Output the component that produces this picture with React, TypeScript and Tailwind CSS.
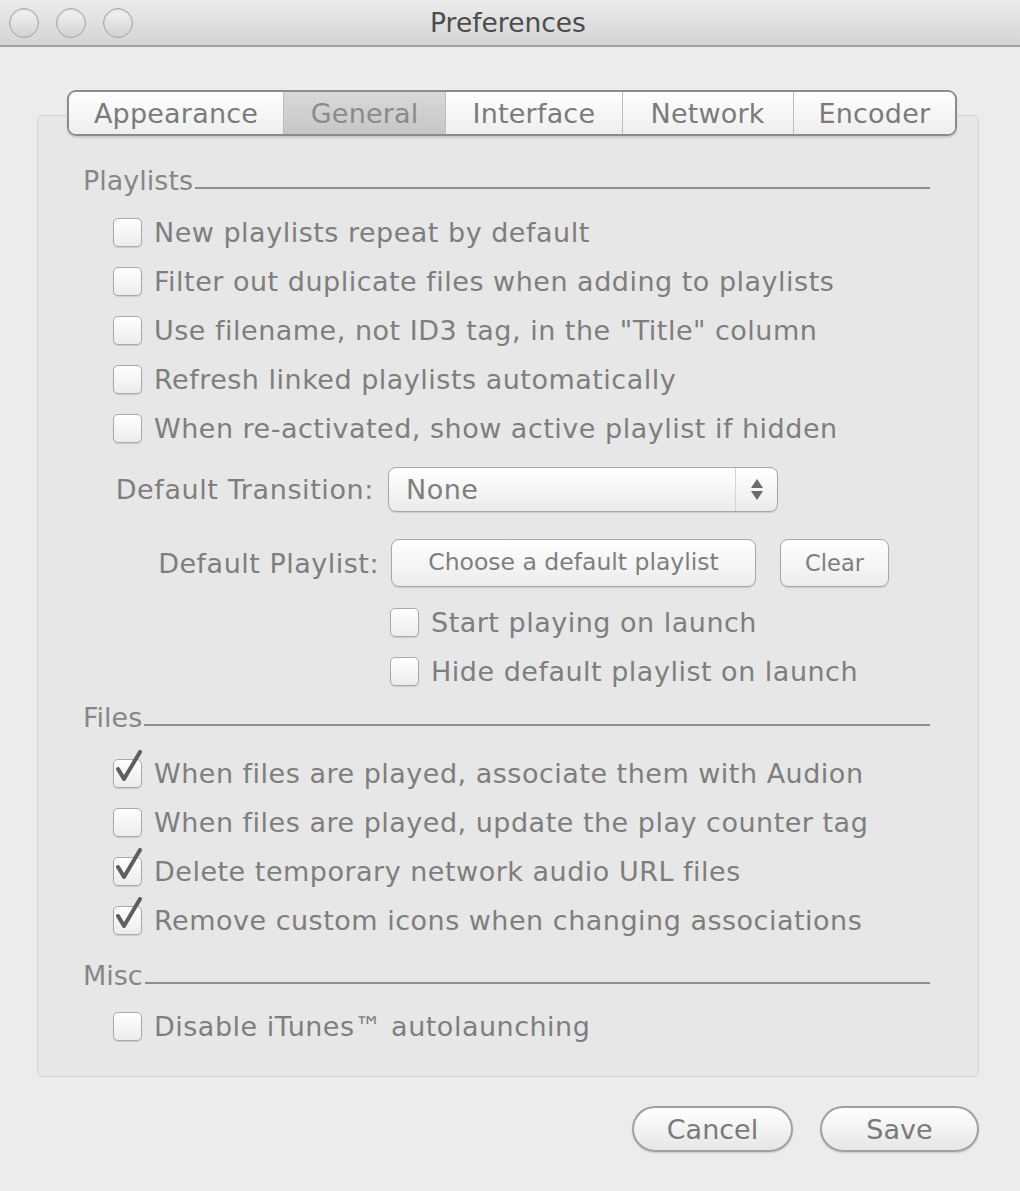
import React from "react";

const FONT = { fontFamily: '"DejaVu Sans", "Liberation Sans", sans-serif' };

function Box({ checked }: { checked?: boolean }) {
  return (
    <div className="relative w-[29px] h-[29px] shrink-0">
      <div className="absolute inset-0 rounded-[5px] border border-[#a9a9a9] bg-gradient-to-b from-[#ffffff] to-[#ececec] shadow-[0_1px_1px_rgba(0,0,0,0.12)]" />
      {checked && (
        <svg className="absolute left-[1px] top-[-9px]" width="30" height="36" viewBox="0 0 30 36">
          <path d="M4 19 L10 29 L26 2" fill="none" stroke="#5e5e5e" strokeWidth="4" strokeLinecap="round" strokeLinejoin="round" />
        </svg>
      )}
    </div>
  );
}

function Check({ label, checked }: { label: string; checked?: boolean }) {
  return (
    <div className="h-[49px] flex items-center gap-[12px]">
      <Box checked={checked} />
      <span className="text-[27px] leading-none tracking-[0.5px] text-[#7e7e7e] whitespace-nowrap pt-[0px]">{label}</span>
    </div>
  );
}

function Heading({ title }: { title: string }) {
  return (
    <div className="h-[36px] flex items-center pr-[48px]">
      <span className="text-[27px] leading-none text-[#878787] whitespace-nowrap">{title}</span>
      <div className="flex-1 h-[2px] bg-[#8e8e8e] mt-[16px] ml-[2px]" />
    </div>
  );
}

function Light() {
  return (
    <div className="w-[30px] h-[30px] rounded-full border border-[#a6a6a6] bg-gradient-to-b from-[#f4f4f4] to-[#d2d2d2] shadow-[inset_0_1px_2px_rgba(0,0,0,0.15)]" />
  );
}

export default function App() {
  const tabs = [
    { t: "Appearance", w: 215 },
    { t: "General", w: 163, sel: true },
    { t: "Interface", w: 177 },
    { t: "Network", w: 172 },
    { t: "Encoder", w: 163 },
  ];
  return (
    <div className="w-[1020px] h-[1191px] bg-[#ececec] overflow-hidden flex flex-col" style={FONT}>
      {/* Title bar */}
      <div className="h-[47px] shrink-0 relative flex items-center border-b-2 border-[#a2a2a2] bg-gradient-to-b from-[#ececec] to-[#d4d4d4]">
        <div className="flex items-center gap-[17px] pl-[9px]">
          <Light />
          <Light />
          <Light />
        </div>
        <div className="absolute inset-0 flex items-center justify-center">
          <span className="text-[26.5px] leading-none text-[#4c4c4c] ml-[-4px] pt-[2px]">Preferences</span>
        </div>
      </div>

      {/* Body */}
      <div className="flex-1 pl-[37px] pr-[41px] pt-[68px] flex flex-col">
        <div className="h-[962px] rounded-[6px] border border-[#d2d2d2] bg-[#e7e7e7] flex flex-col">
          {/* Tabs */}
          <div className="mt-[-26px] ml-[29px] flex h-[46px] w-[890px] rounded-[9px] border-2 border-[#8c8c8c] overflow-hidden shadow-[0_2px_2px_rgba(0,0,0,0.12)]">
            {tabs.map((tb, i) => (
              <div
                key={tb.t}
                style={{ width: tb.w }}
                className={
                  "h-full flex items-center justify-center text-[27px] leading-none tracking-[0.2px] " +
                  (i > 0 ? "border-l border-[#bdbdbd] " : "") +
                  (tb.sel
                    ? "bg-gradient-to-b from-[#d9d9d9] to-[#c6c6c6] text-[#8a8a8a]"
                    : "bg-gradient-to-b from-[#ffffff] to-[#eeeeee] text-[#7b7b7b]")
                }
              >
                {tb.t}
              </div>
            ))}
          </div>

          <div className="pl-[45px] flex flex-col">
            <div className="mt-[26px]">
              <Heading title="Playlists" />
            </div>
            <div className="ml-[30px] mt-[10px] flex flex-col">
              <Check label="New playlists repeat by default" />
              <Check label="Filter out duplicate files when adding to playlists" />
              <Check label={'Use filename, not ID3 tag, in the "Title" column'} />
              <Check label="Refresh linked playlists automatically" />
              <Check label="When re-activated, show active playlist if hidden" />

              <div className="mt-[14px] h-[45px] flex items-center">
                <span className="w-[261px] text-right text-[27px] leading-none tracking-[0.6px] text-[#7e7e7e] whitespace-nowrap">Default Transition:</span>
                <div className="ml-[14px] w-[390px] h-[45px] rounded-[8px] border border-[#a8a8a8] bg-gradient-to-b from-[#ffffff] to-[#ebebeb] shadow-[0_1px_1px_rgba(0,0,0,0.12)] flex items-center">
                  <span className="flex-1 pl-[17px] text-[27px] leading-none tracking-[0.5px] text-[#7e7e7e]">None</span>
                  <div className="w-[42px] h-full border-l border-[#d4d4d4] flex flex-col items-center justify-center gap-[3px]">
                    <svg width="12" height="9" viewBox="0 0 12 9"><path d="M6 0 L12 9 L0 9 Z" fill="#6a6a6a" /></svg>
                    <svg width="12" height="9" viewBox="0 0 12 9"><path d="M0 0 L12 0 L6 9 Z" fill="#6a6a6a" /></svg>
                  </div>
                </div>
              </div>

              <div className="mt-[27px] h-[48px] flex items-center">
                <span className="w-[266px] text-right text-[27px] leading-none tracking-[0.5px] text-[#7e7e7e] whitespace-nowrap">Default Playlist:</span>
                <div className="ml-[12px] w-[365px] h-[48px] rounded-[8px] border border-[#a8a8a8] bg-gradient-to-b from-[#ffffff] to-[#ececec] shadow-[0_1px_1px_rgba(0,0,0,0.12)] flex items-center justify-center">
                  <span className="text-[23.5px] leading-none text-[#7e7e7e]">Choose a default playlist</span>
                </div>
                <div className="ml-[24px] w-[109px] h-[48px] rounded-[8px] border border-[#a8a8a8] bg-gradient-to-b from-[#ffffff] to-[#ececec] shadow-[0_1px_1px_rgba(0,0,0,0.12)] flex items-center justify-center">
                  <span className="text-[22.5px] leading-none text-[#7e7e7e]">Clear</span>
                </div>
              </div>

              <div className="mt-[11px] ml-[277px] flex flex-col">
                <Check label="Start playing on launch" />
                <Check label="Hide default playlist on launch" />
              </div>
            </div>

            <div className="mt-[3px]">
              <Heading title="Files" />
            </div>
            <div className="ml-[30px] mt-[14px] flex flex-col">
              <Check label="When files are played, associate them with Audion" checked />
              <Check label="When files are played, update the play counter tag" />
              <Check label="Delete temporary network audio URL files" checked />
              <Check label="Remove custom icons when changing associations" checked />
            </div>

            <div className="mt-[12px]">
              <Heading title="Misc" />
            </div>
            <div className="ml-[30px] mt-[9px] flex flex-col">
              <Check label="Disable iTunes™ autolaunching" />
            </div>
          </div>
        </div>

        {/* Buttons */}
        <div className="mt-[29px] flex justify-end gap-[27px]">
          <div className="w-[161px] h-[46px] rounded-full border-2 border-[#a0a0a0] bg-gradient-to-b from-[#ffffff] to-[#e6e6e6] shadow-[0_1px_2px_rgba(0,0,0,0.15)] flex items-center justify-center">
            <span className="text-[27px] leading-none text-[#7a7a7a] pt-[1px]">Cancel</span>
          </div>
          <div className="w-[159px] h-[46px] rounded-full border-2 border-[#a0a0a0] bg-gradient-to-b from-[#ffffff] to-[#e6e6e6] shadow-[0_1px_2px_rgba(0,0,0,0.15)] flex items-center justify-center">
            <span className="text-[27px] leading-none text-[#7a7a7a] pt-[1px]">Save</span>
          </div>
        </div>
      </div>
    </div>
  );
}
